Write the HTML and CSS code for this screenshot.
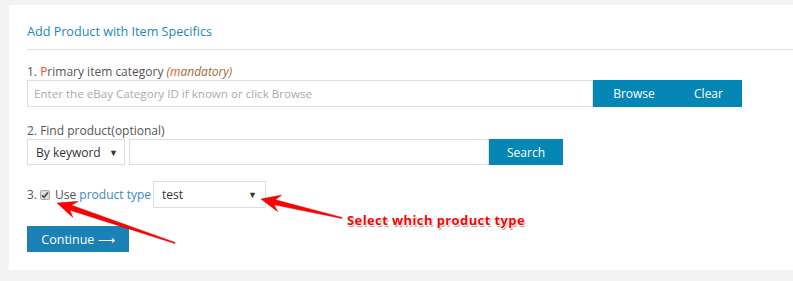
FILE: index.html
```html
<!DOCTYPE html>
<html lang="en">
  <head>
    <meta charset="UTF-8" />
    <title>Add Product with Item Specifics</title>
    <link rel="stylesheet" href="styles.css">
  </head>
  <body>
    <div class="panel">
      <h3 class="title">Add Product with Item Specifics</h3>

      <div class="step">
        <label class="lbl">1. <span class="hl">P</span>rimary item category <em class="req">(<span class="hl">m</span>andatory)</em></label>
        <div class="row">
          <input class="txt cat" type="text" placeholder="Enter the eBay Category ID if known or click Browse">
          <button class="btn browse">Browse</button>
          <button class="btn clear">Clear</button>
        </div>
      </div>

      <div class="step">
        <label class="lbl">2. Find product(optional)</label>
        <div class="row">
          <div class="sel kw">By keyword <span class="caret">&#9660;</span></div>
          <input class="txt find" type="text">
          <button class="btn search">Search</button>
        </div>
      </div>

      <div class="row use">
        <span>3.</span>
        <span class="chk"><svg width="8" height="8" viewBox="0 0 8 8"><path d="M1 4.2 L3 6.2 L7 1.5" fill="none" stroke="#444" stroke-width="1.6"/></svg></span>
        <span>Use <a href="#" class="link">product type</a></span>
        <div class="sel ptype">test <span class="caret">&#9660;</span></div>
      </div>

      <button class="btn go">Continue <span class="arr">&#10230;</span></button>

      <!-- annotations -->
      <svg class="arrows" width="793" height="281" viewBox="0 0 793 281">
        <g fill="#f00" stroke="#c00" stroke-width="0.4">
          <polygon transform="translate(175 243) rotate(198.7)" points="0,-0.6 110,-2.6 105,-8.5 124.6,0 105,8.5 110,2.6 0,0.6"/>
          <polygon transform="translate(342 218) rotate(193.2)" points="0,-0.6 69,-2.6 64,-8.5 83.2,0 64,8.5 69,2.6 0,0.6"/>
        </g>
      </svg>
      <div class="note">Select which product type</div>
    </div>
  </body>
</html>
```

FILE: styles.css
```css
* {
  margin: 0;
  padding: 0;
  box-sizing: border-box;
}
body {
  background: #f3f3f3;
  font-family: "Open Sans", "Noto Sans", sans-serif;
  font-size: 12px;
  color: #555;
}
.panel {
  position: relative;
  margin: 5px 0 0 9px;
  height: 265px;
  background: #fff;
  padding: 20px 0 0 18px;
}
.title {
  font-weight: normal;
  font-size: 12.6px;
  color: #1c87ba;
  line-height: 14px;
  padding-bottom: 10px;
  border-bottom: 1px solid #ddd;
  margin-bottom: 14px;
}
.step {
  margin-bottom: 16px;
}
.lbl {
  display: block;
  line-height: 15px;
  margin-bottom: 1px;
}
.hl {
  color: #ee5522;
}
.req {
  color: #9a6a35;
}
.row {
  display: flex;
  align-items: center;
}
.txt {
  height: 27px;
  border: 1px solid #ddd;
  font: inherit;
  font-size: 11.6px;
  padding: 0 6px;
  outline: none;
}
.txt::placeholder {
  color: #aaa;
}
.cat {
  width: 566px;
}
.find {
  width: 360px;
  height: 26px;
  margin-left: 4px;
}
.btn {
  border: none;
  background: #0587b6;
  color: #fff;
  font: inherit;
  font-size: 12px;
  height: 27px;
}
.browse {
  width: 82px;
}
.clear {
  width: 67px;
}
.search {
  width: 74px;
  height: 26px;
}
.sel {
  display: flex;
  align-items: center;
  justify-content: space-between;
  border: 1px solid #ddd;
  height: 26px;
  padding: 0 6px 0 8px;
  color: #333;
}
.caret {
  font-size: 9px;
}
.kw {
  width: 98px;
}
.use {
  margin-top: 0;
  height: 27px;
}
.chk {
  display: inline-flex;
  align-items: center;
  justify-content: center;
  width: 10px;
  height: 10px;
  margin: 0 5px 0 3px;
  background: #ddd;
  border: 1px solid #aaa;
  border-radius: 2px;
}
.link {
  color: #3a87c0;
  text-decoration: none;
}
.ptype {
  width: 113px;
  height: 27px;
  margin-left: 2px;
  padding-right: 8px;
}
.go {
  display: block;
  margin-top: 18px;
  width: 102px;
  height: 26px;
  background: #1b80b3;
  font-size: 12.5px;
}
.arr {
  font-size: 12px;
}
.arrows {
  position: absolute;
  left: -9px;
  top: -5px;
  pointer-events: none;
}
.note {
  position: absolute;
  left: 338px;
  top: 206px;
  font-family: "Open Sans", sans-serif;
  font-weight: bold;
  font-size: 13px;
  letter-spacing: 0.4px;
  color: #f00;
  text-shadow: 1px 0 0 #fff, -1px 0 0 #fff, 0 1px 0 #fff, 0 -1px 0 #fff, 1px 2px 1px #999;
}
```
